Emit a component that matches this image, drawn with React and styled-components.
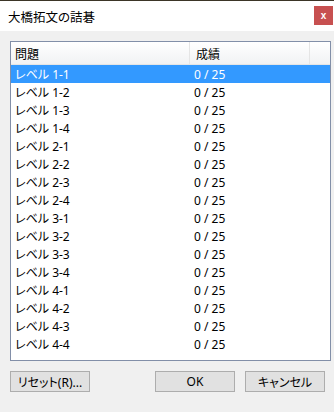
import styled, { createGlobalStyle } from 'styled-components'

const GlobalStyle = createGlobalStyle`
html, body {
  margin: 0;
  padding: 0;
  background: #f0f0f0;
}
body {
  font-family: "Noto Sans", "Noto Sans CJK JP", sans-serif;
  font-feature-settings: "palt";
}
`

const Window = styled.div`
width: 334px;
height: 412px;
display: flex;
flex-direction: column;
background: #f0f0f0;
overflow: hidden;
`
const TopEdge = styled.div`
height: 1px;
background: #3b3527;
`
const TitleBar = styled.div`
height: 30px;
background: #ffffff;
display: flex;
align-items: center;
justify-content: space-between;
padding-left: 8px;
`
const Title = styled.span`
font-size: 12.5px;
color: #000;
font-family: "Noto Sans CJK JP", sans-serif;
`
const CloseBox = styled.div`
width: 19px;
height: 19px;
margin-right: 1px;
margin-top: -1px;
background: #c75050;
color: #fff;
font-size: 10px;
font-weight: bold;
display: flex;
align-items: center;
justify-content: center;
font-family: "Liberation Sans", sans-serif;
`
const Body = styled.div`
padding: 10px 3px 0 10px;
display: flex;
flex-direction: column;
`
const ListBox = styled.div`
height: 318px;
border: 1px solid #828fa8;
background: #fff;
display: flex;
flex-direction: column;
`
const HeaderRow = styled.div`
display: flex;
height: 23px;
background: linear-gradient(#ffffff, #f1f2f4);
border-bottom: 1px solid #e5e5e5;
box-sizing: border-box;
`
const HeadCell = styled.div`
width: ${p => p.w}px;
flex: ${p => (p.w ? 'none' : '1')};
padding-left: ${p => p.pad}px;
box-sizing: border-box;
display: flex;
align-items: center;
font-size: 12px;
font-family: "Noto Sans CJK JP", sans-serif;
color: #000;
border-right: ${p => (p.w ? '1px solid #e5e5e5' : 'none')};
`
const Row = styled.div`
display: flex;
height: 18px;
align-items: center;
background: ${p => (p.selected ? '#3399ff' : 'transparent')};
color: ${p => (p.selected ? '#fff' : '#000')};
font-size: 12px;
`
const Cell = styled.div`
width: ${p => p.w}px;
padding-left: ${p => p.pad}px;
box-sizing: border-box;
white-space: nowrap;
`
const ButtonRow = styled.div`
display: flex;
margin-top: 10px;
padding-right: 6px;
`
const Button = styled.button`
width: 80px;
height: 21px;
padding: 0;
background: #e1e1e1;
border: 1px solid #adadad;
font-family: "Noto Sans", "Noto Sans CJK JP", sans-serif;
font-feature-settings: "palt";
font-size: 12px;
color: #000;
margin-left: ${p => p.ml || 0}px;
display: flex;
align-items: center;
justify-content: center;
`

const levels = []
for (let i = 1; i <= 4; i++) {
    for (let j = 1; j <= 4; j++) levels.push(`${i}-${j}`)
}

const App = () => {
    return (
        <Window>
            <GlobalStyle />
            <TopEdge />
            <TitleBar>
                <Title>大橋拓文の詰碁</Title>
                <CloseBox>x</CloseBox>
            </TitleBar>
            <Body>
                <ListBox>
                    <HeaderRow>
                        <HeadCell w={179} pad={4}>問題</HeadCell>
                        <HeadCell w={120} pad={6}>成績</HeadCell>
                        <HeadCell />
                    </HeaderRow>
                    {levels.map((lv, i) => (
                        <Row key={lv} selected={i === 0}>
                            <Cell w={179} pad={4}>レベル {lv}</Cell>
                            <Cell w={120} pad={4}>0 / 25</Cell>
                        </Row>
                    ))}
                </ListBox>
                <ButtonRow>
                    <Button>リセット(R)...</Button>
                    <Button ml={65}>OK</Button>
                    <Button ml={10}>キャンセル</Button>
                </ButtonRow>
            </Body>
        </Window>
    )
}

export default App
